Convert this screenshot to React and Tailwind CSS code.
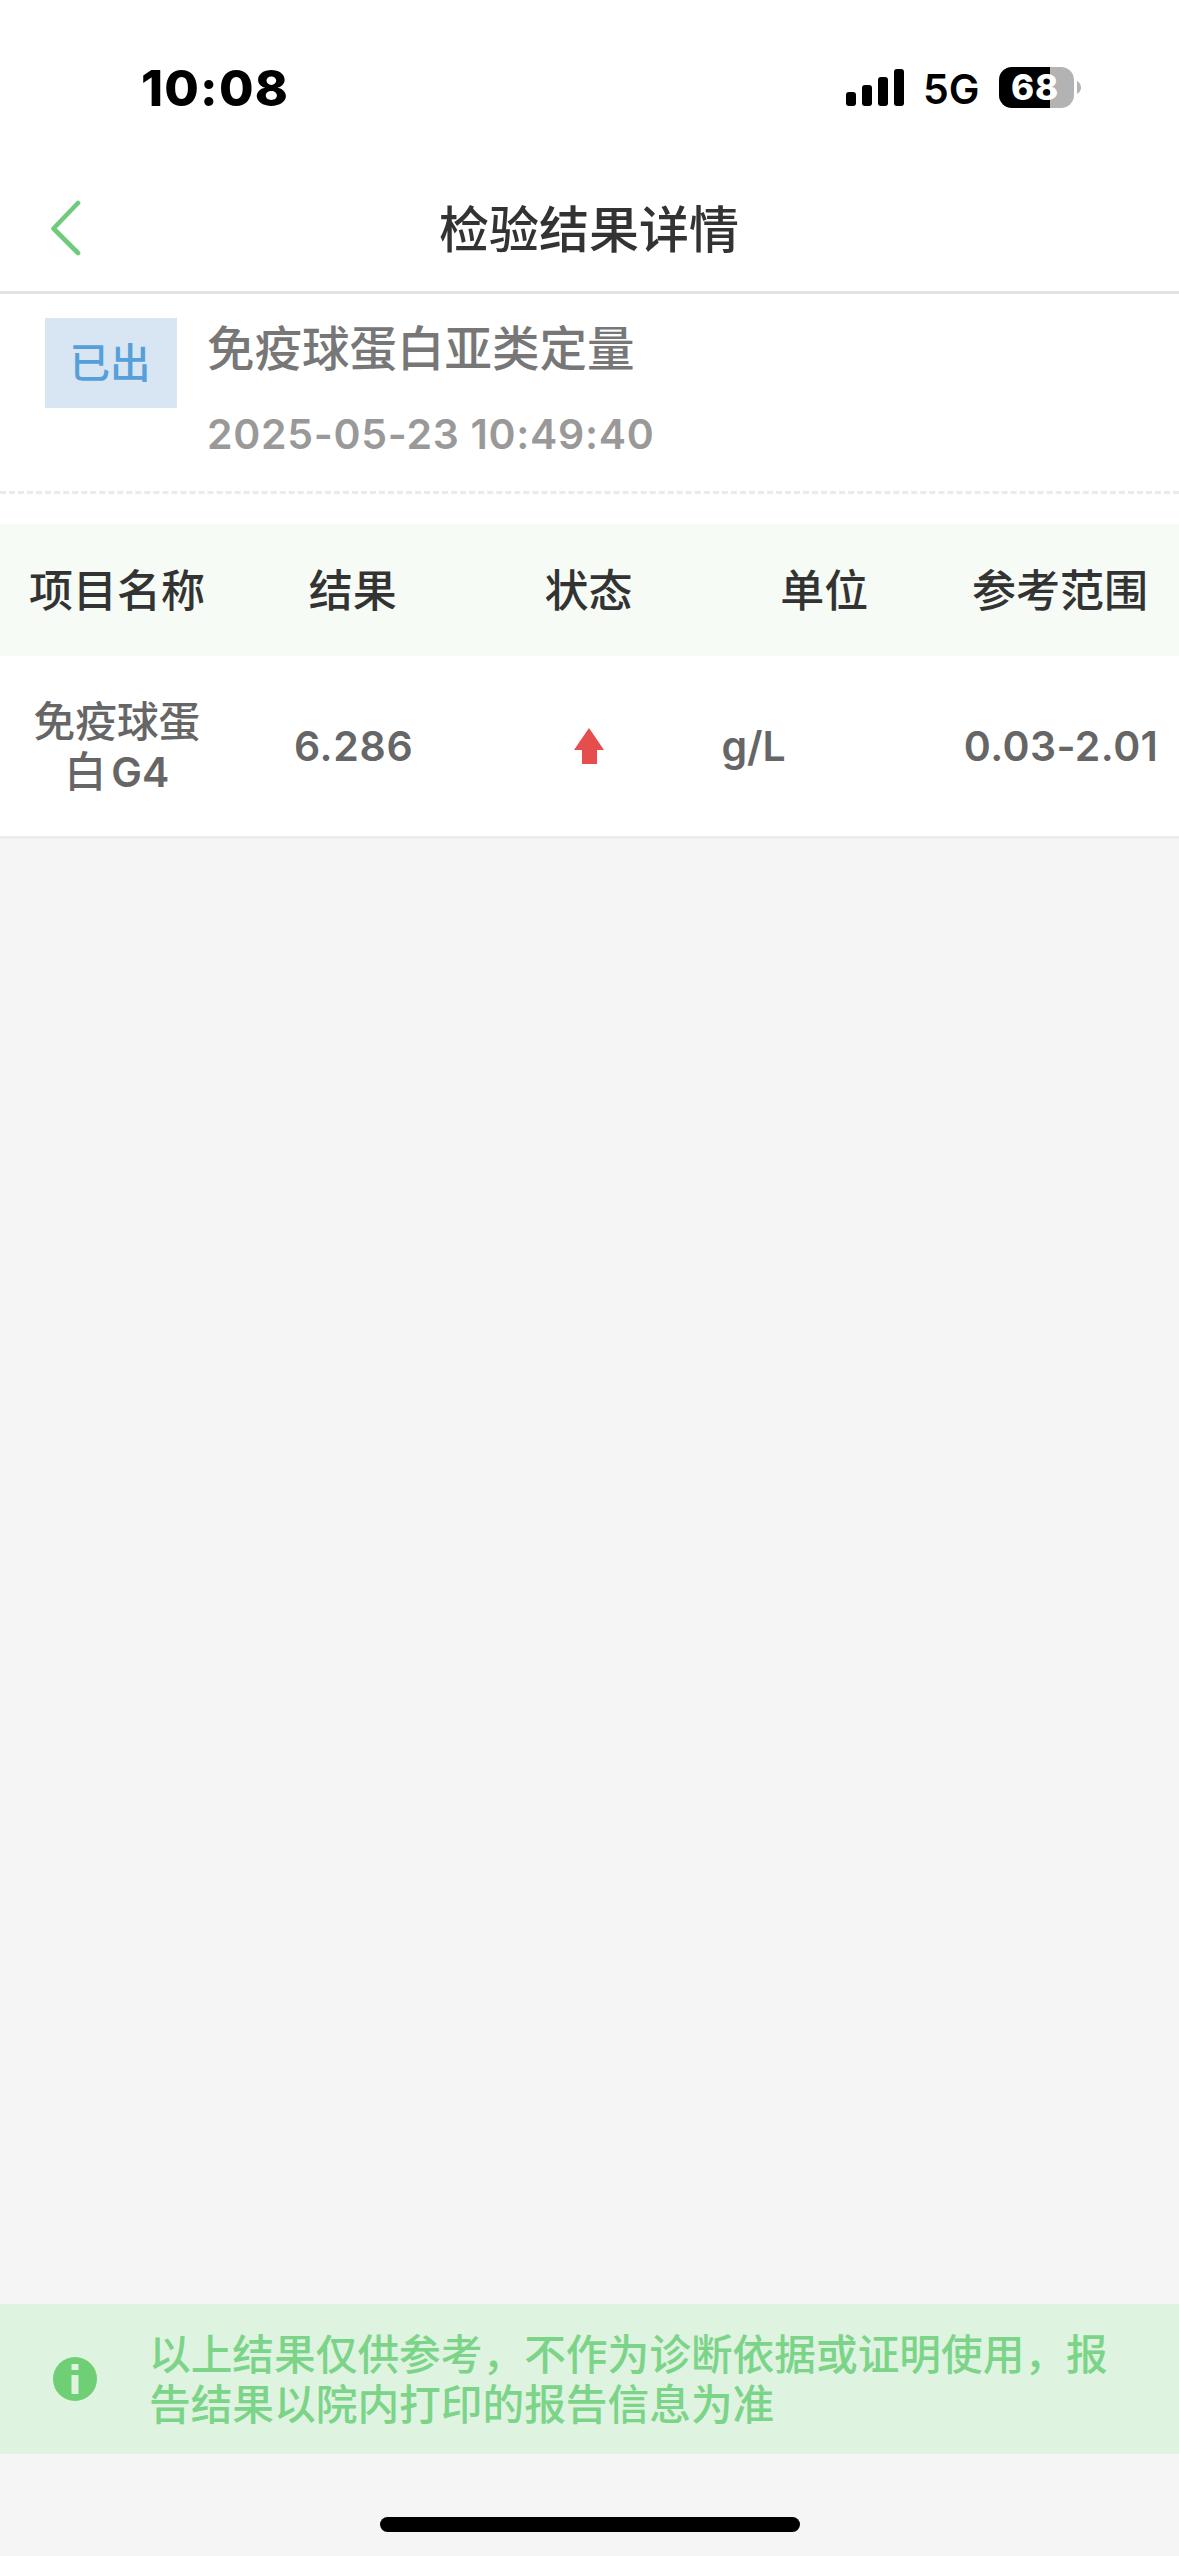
const HEADERS = ["项目名称", "结果", "状态", "单位", "参考范围"];

function StatusBar() {
  return (
    <div className="flex h-[177px] items-start bg-white pl-[141px] pr-[98px] text-black">
      <div className="mt-[58px] text-[50px] font-extrabold leading-[60px] tracking-[1.2px]">10:08</div>
      <div className="ml-auto mt-[67px] flex h-[41px] items-center">
        <div className="flex h-[37px] items-end gap-[6px]">
          <span className="h-[14px] w-[10px] rounded-[3px] bg-black" />
          <span className="h-[21px] w-[10px] rounded-[3px] bg-black" />
          <span className="h-[29px] w-[10px] rounded-[3px] bg-black" />
          <span className="h-[37px] w-[10px] rounded-[3px] bg-black" />
        </div>
        <div className="ml-[19px] mt-[3px] w-[56px] whitespace-nowrap text-[41px] font-semibold leading-[42px]">5G</div>
        <div className="relative ml-[20px] h-[41px] w-[75px] overflow-hidden rounded-[13px] bg-[#b3b3b3]">
          <div className="h-full w-[51px] bg-black" />
          <div className="absolute inset-0 flex items-center justify-center pr-[3px] text-[35px] font-extrabold leading-[41px] tracking-[0.8px] text-white">68</div>
        </div>
        <svg className="ml-[3px] h-[13px] w-[4px]" viewBox="0 0 4 13">
          <path d="M0 0C2.5 1.2 4 3.7 4 6.5S2.5 11.8 0 13Z" fill="#b3b3b3" />
        </svg>
      </div>
    </div>
  );
}

function NavBar() {
  return (
    <div className="flex h-[117px] items-center border-b-[3px] border-[#e3e3e3] bg-white px-[48px] pb-[12px]">
      <svg className="h-[58px] w-[36px] shrink-0" viewBox="0 0 36 58" fill="none" stroke="#6fcb7b" strokeWidth="4.6">
        <path d="M30 4L5.5 29.5L30 54" strokeLinejoin="round" strokeLinecap="round" />
      </svg>
      <h1 className="mt-[3px] flex-1 pr-[37px] text-center text-[50px] font-medium leading-[60px] text-[#333]">检验结果详情</h1>
    </div>
  );
}

function ReportInfo() {
  return (
    <div className="flex h-[200px] items-start border-b-[3px] border-dashed border-[#ebebeb] bg-white pl-[45px] pt-[24px]">
      <div className="flex h-[90px] w-[132px] items-center justify-center bg-[#d8e6f4] pr-[2px] pt-[2px] text-[40.5px] font-medium text-[#579fd8]">已出</div>
      <div className="ml-[30px]">
        <div className="mt-px text-[47.5px] font-medium leading-[60px] text-[#777]">免疫球蛋白亚类定量</div>
        <div className="mt-[25px] text-[41px] font-semibold leading-[60px] tracking-[0.7px] text-[#999]">2025-05-23 10:49:40</div>
      </div>
    </div>
  );
}

function ResultTable() {
  return (
    <div className="bg-white pt-[30px]">
      <div className="grid h-[132px] grid-cols-5 items-center bg-[#f6fbf6] pt-[2px] text-center text-[44px] font-medium text-[#333]">
        {HEADERS.map((h) => (
          <div key={h} className="pr-[2px]">{h}</div>
        ))}
      </div>
      <div className="grid h-[183px] grid-cols-5 items-center border-b-[3px] border-[#ececec] text-center text-[41px] font-semibold leading-[50px] text-[#666]">
        <div className="pr-[2px] pt-[2px] text-[41.7px] font-medium">
          <div>免疫球蛋</div>
          <div className="flex justify-center gap-[5px]">
            <span>白</span>
            <span className="text-[41px] font-semibold">G4</span>
          </div>
        </div>
        <div className="tracking-[0.7px]">6.286</div>
        <div className="flex justify-center">
          <svg className="h-[36px] w-[30px]" viewBox="0 0 30 36" fill="#e64d4d">
            <path d="M15 0L30 22H23V36H8V22H0Z" />
          </svg>
        </div>
        <div className="pl-[14px] text-left">g/L</div>
        <div className="whitespace-nowrap tracking-[0.4px]">0.03-2.01</div>
      </div>
    </div>
  );
}

function Notice() {
  return (
    <div className="flex h-[150px] items-center bg-[#def3e0] pl-[53px]">
      <svg className="h-[44px] w-[44px] shrink-0" viewBox="0 0 44 44">
        <circle cx="22" cy="22" r="22" fill="#6fcf74" />
        <path d="M18.5 7h7v6h-7zM18.5 18h7v19h-7z" fill="#def3e0" />
      </svg>
      <p className="ml-[52px] mt-[2px] w-[970px] text-[41.7px] font-medium leading-[50px] text-[#7bd488]">
        以上结果仅供参考，不作为诊断依据或证明使用，报告结果以院内打印的报告信息为准
      </p>
    </div>
  );
}

export default function App() {
  return (
    <div className="flex h-[2556px] w-[1179px] flex-col bg-[#f5f5f5] font-['Inter','Noto_Sans_CJK_SC',sans-serif]">
      <StatusBar />
      <NavBar />
      <ReportInfo />
      <ResultTable />
      <div className="flex-1" />
      <Notice />
      <div className="flex h-[102px] justify-center pt-[63px]">
        <div className="h-[15px] w-[420px] rounded-full bg-black" />
      </div>
    </div>
  );
}
